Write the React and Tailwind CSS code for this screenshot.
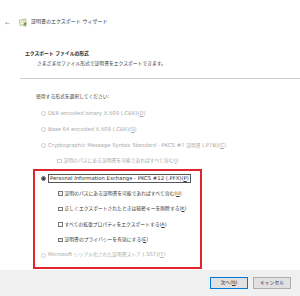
import React from "react";

// access-key letter gets an underline, like the Windows dialog
function Key({ k }) {
  return (
    <>
      (<span className="underline">{k}</span>)
    </>
  );
}

// latin runs are set a little larger so they get the width of Segoe UI
function L({ children }) {
  return <span className="text-[5.3px]">{children}</span>;
}

function Radio({ checked, disabled }) {
  return (
    <span
      className={`flex h-[5px] w-[5px] shrink-0 items-center justify-center rounded-full border-[0.5px] ${
        disabled ? "border-[#cfcfcf]" : "border-[#666]"
      }`}
    >
      {checked && <span className="h-[3px] w-[3px] rounded-full bg-[#333]" />}
    </span>
  );
}

function Check({ checked, disabled }) {
  return (
    <span
      className={`flex h-[4.5px] w-[4.5px] shrink-0 items-center justify-center border-[0.5px] ${
        disabled ? "border-[#cfcfcf]" : "border-[#777]"
      }`}
    >
      {checked && (
        <svg viewBox="0 0 10 10" className="h-[3.5px] w-[3.5px]">
          <path d="M1.5 5.2 L4 7.6 L8.6 2.4" fill="none" stroke="#444" strokeWidth="1.3" />
        </svg>
      )}
    </span>
  );
}

function Row({ children, className = "" }) {
  return <div className={`flex items-center gap-[2px] ${className}`}>{children}</div>;
}

export default function App() {
  return (
    <div className="flex h-[296px] w-[300px] flex-col overflow-hidden bg-white font-['DejaVu_Sans','Noto_Sans_CJK_JP',sans-serif] text-[4.8px] text-[#333]">
      {/* wizard title */}
      <div className="mt-[17px] flex h-[10px] items-center">
        <span className="ml-[5px] w-[12px] text-[6px] text-[#999]">←</span>
        <svg viewBox="0 0 10 10" className="ml-[2px] h-[9px] w-[9px]">
          <rect x="1" y="1.5" width="7" height="6" fill="#fffbe6" stroke="#8a8a5a" strokeWidth="0.6" transform="rotate(-12 5 5)" />
          <path d="M2.5 3.6 L6.5 2.8 M2.7 5 L6.7 4.2" stroke="#9a9a9a" strokeWidth="0.5" />
          <circle cx="6.6" cy="6.6" r="1.5" fill="#5aa832" />
          <path d="M5.9 7.8 L5.6 9.6 M7.2 7.8 L7.6 9.6" stroke="#3f8a26" strokeWidth="0.7" />
        </svg>
        <span className="ml-[3px] text-[5px] text-[#333]">証明書のエクスポート ウィザード</span>
      </div>

      {/* section header */}
      <div className="mt-[22px] flex h-[10px] items-center pl-[25px] font-bold text-[#222]">
        エクスポート ファイルの形式
      </div>
      <div className="flex h-[10px] items-center pl-[37px]">
        さまざまなファイル形式で証明書をエクスポートできます。
      </div>
      <div className="ml-[20px] mt-[8.5px] h-px bg-[#cfcfcf]" />

      {/* format choice */}
      <div className="mt-[13px] flex h-[10px] items-center pl-[36px]">
        使用する形式を選択してください:
      </div>

      <div className="ml-[33px] mt-[4px] flex flex-col">
        <Row className="h-[16px] pl-[8px] text-[#a8a8a8]">
          <Radio disabled />
          <L>
            DER encoded binary X.509 (.CER)
            <Key k="D" />
          </L>
        </Row>
        <Row className="h-[16px] pl-[8px] text-[#a8a8a8]">
          <Radio disabled />
          <L>
            Base 64 encoded X.509 (.CER)
            <Key k="S" />
          </L>
        </Row>
        <Row className="h-[16px] pl-[8px] text-[#a8a8a8]">
          <Radio disabled />
          <span>
            <L>Cryptographic Message Syntax Standard - PKCS #7 </L>証明書 <L>(.P7B)<Key k="C" /></L>
          </span>
        </Row>
        <Row className="h-[15px] pl-[24px] text-[#a8a8a8]">
          <Check disabled />
          <span>
            証明のパスにある証明書を可能であればすべて含む
            <Key k="I" />
          </span>
        </Row>

        {/* highlighted block */}
        <div className="flex w-[169px] flex-col border-2 border-[#e0262b] pb-[4px] pl-[6px]">
          <Row className="h-[15.4px]">
            <Radio checked />
            <span className="border-[0.5px] border-[#555] px-[1px] text-[5.3px] leading-[7px]">
              Personal Information Exchange - PKCS #12 (.PFX)
              <Key k="P" />
            </span>
          </Row>
          <Row className="h-[15.4px] pl-[17px]">
            <Check checked />
            <span>
              証明のパスにある証明書を可能であればすべて含む
              <Key k="U" />
            </span>
          </Row>
          <Row className="h-[15.4px] pl-[17px]">
            <Check />
            <span>
              正しくエクスポートされたときは秘密キーを削除する
              <Key k="K" />
            </span>
          </Row>
          <Row className="h-[15.4px] pl-[17px]">
            <Check />
            <span>
              すべての拡張プロパティをエクスポートする
              <Key k="A" />
            </span>
          </Row>
          <Row className="h-[15.4px] pl-[17px]">
            <Check checked />
            <span>
              証明書のプライバシーを有効にする
              <Key k="E" />
            </span>
          </Row>
          <Row className="h-[15.4px] text-[#a8a8a8]">
            <Radio disabled />
            <span>
              <L>Microsoft </L>シリアル化された証明書ストア <L>(.SST)<Key k="T" /></L>
            </span>
          </Row>
        </div>
      </div>

      {/* footer */}
      <div className="mt-auto flex h-[26px] items-center justify-end gap-[5px] bg-[#f0f0f0] pr-[9px]">
        <button className="flex h-[12px] w-[38px] items-center justify-center border border-[#0078d7] bg-[#e1e1e1] text-[4.8px] text-[#333]">
          次へ<Key k="N" />
        </button>
        <button className="flex h-[12px] w-[38px] items-center justify-center border-[0.5px] border-[#adadad] bg-[#e1e1e1] text-[4.8px] text-[#333]">
          キャンセル
        </button>
      </div>
    </div>
  );
}
